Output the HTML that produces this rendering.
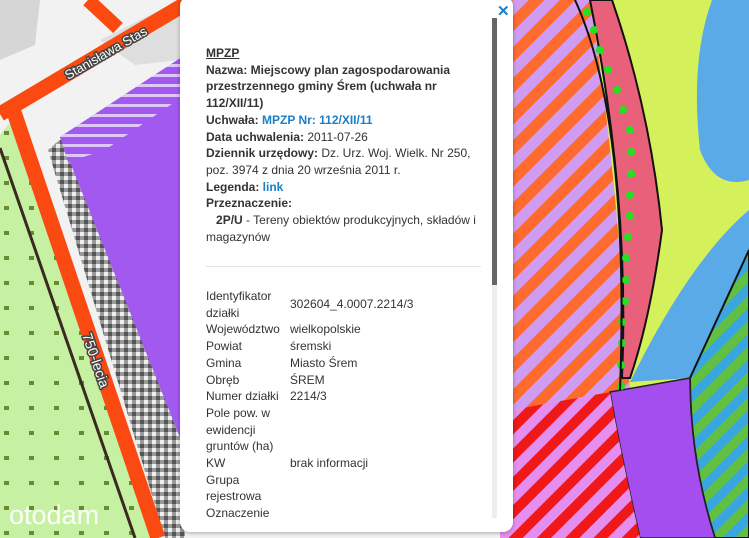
<!DOCTYPE html>
<html><head><meta charset="utf-8"><style>
html,body{margin:0;padding:0;width:749px;height:538px;overflow:hidden;font-family:"Liberation Sans",Arial,sans-serif}
#map{position:absolute;left:0;top:0}
#pop{position:absolute;left:180px;top:-4px;width:333px;height:536px;background:#fff;border-radius:10px;box-shadow:0 1px 4px rgba(0,0,0,.3)}
.t{position:absolute;left:26px;top:49px;width:292px;font-size:12px;line-height:16.7px;color:#333}
.t b{color:#333}
.bl{color:#1a7fc8;font-weight:bold}
#sep{position:absolute;left:26px;top:270px;width:275px;height:1px;background:#e4e4e4}
table{position:absolute;left:24px;top:292px;border-collapse:collapse;font-size:12px;line-height:16.7px;color:#333}
td{padding:0 2px;vertical-align:middle}
td:first-child{width:80px;vertical-align:top}
#sb{position:absolute;left:312px;top:22px;width:5px;height:500px;background:#eee}
#th{position:absolute;left:312px;top:22px;width:5px;height:267px;background:#666}
#x{position:absolute;left:317px;top:6px;color:#1a7fc8;font-weight:bold;font-size:15px}
#logo{position:absolute;left:9px;top:500px;color:#fff;font-size:27px;font-weight:normal;letter-spacing:0px;opacity:.95}
</style></head><body>
<svg id="map" width="749" height="538" viewBox="0 0 749 538">
<defs>
<pattern id="ol" width="22" height="22" patternUnits="userSpaceOnUse" patternTransform="rotate(-45)"><rect width="22" height="22" fill="#cf9cf2"/><rect width="22" height="11" fill="#ff6a2e"/></pattern>
<pattern id="rl" width="20" height="20" patternUnits="userSpaceOnUse" patternTransform="rotate(-45)"><rect width="20" height="20" fill="#e58ef0"/><rect width="20" height="10" fill="#f01818"/></pattern>
<pattern id="bg" width="18" height="18" patternUnits="userSpaceOnUse" patternTransform="rotate(-45)"><rect width="18" height="18" fill="#3aa6e0"/><rect width="18" height="9" fill="#62c040"/></pattern>
<pattern id="ph" width="10" height="10" patternUnits="userSpaceOnUse"><rect width="10" height="10" fill="#a259f0"/><rect y="4" width="10" height="3" fill="#ddc8f8"/></pattern>
<pattern id="gd" width="25" height="25" patternUnits="userSpaceOnUse"><rect width="25" height="25" fill="#c6f0a2"/><rect x="4" y="6" width="5" height="4" fill="#6a8a30"/></pattern>
<pattern id="ns" width="8" height="8" patternUnits="userSpaceOnUse"><rect width="8" height="8" fill="#9a9a9a"/><rect width="4" height="4" fill="#eee"/><rect x="4" y="4" width="4" height="4" fill="#555"/></pattern>
</defs>
<rect width="749" height="538" fill="#f2f2f2"/>
<polygon points="0,0 40,0 35,45 0,60" fill="#d6d6d6"/>
<polygon points="100,40 180,0 180,60 135,65" fill="#dedede"/>
<polygon points="0,135 12,120 150,538 0,538" fill="url(#gd)"/>
<polygon points="48,150 62,138 185,450 185,538 165,538" fill="url(#ns)"/>
<polygon points="60,137 185,55 185,450" fill="#a259f0"/>
<polygon points="60,137 185,55 185,95 105,150 68,162" fill="url(#ph)"/>
<line x1="0" y1="114" x2="185" y2="4" stroke="#fa4a12" stroke-width="15"/>
<line x1="88" y1="0" x2="118" y2="28" stroke="#fa4a12" stroke-width="14"/>
<line x1="14" y1="112" x2="158" y2="538" stroke="#fa4a12" stroke-width="15"/>
<line x1="0" y1="148" x2="135" y2="538" stroke="#3a2a20" stroke-width="3"/>
<text x="68" y="80" transform="rotate(-30 68 80)" font-size="13" fill="#fff" stroke="#444" stroke-width="3" paint-order="stroke">Stanisława Stas</text>
<text x="82" y="335" transform="rotate(71 82 335)" font-size="14" fill="#fff" stroke="#444" stroke-width="3" paint-order="stroke">750-lecia</text>
<rect x="500" y="0" width="249" height="538" fill="#d4f05a"/>
<path d="M500,0 L590,0 Q615,150 630,390 L610,392 L500,412Z" fill="url(#ol)"/>
<path d="M590,0 L612,0 Q650,110 662,230 Q650,320 630,378 L622,378 Q630,200 590,0Z" fill="#e8607a" stroke="#111" stroke-width="2"/>
<path d="M712,0 L749,0 L749,180 Q715,190 700,150 Q690,60 712,0Z" fill="#5aaae8"/>
<path d="M749,210 L749,250 L690,378 L630,382 Q690,260 749,210Z" fill="#5aaae8"/>
<path d="M749,250 L749,538 L715,538 Q690,460 690,378Z" fill="url(#bg)" stroke="#111" stroke-width="2"/>
<path d="M610,392 L690,378 Q690,460 715,538 L640,538 Q620,450 610,392Z" fill="#a54ef0" stroke="#222" stroke-width="1.5"/>
<path d="M500,412 L610,392 Q620,450 640,538 L500,538Z" fill="url(#rl)"/>
<g fill="#22e022">
<circle cx="587" cy="12" r="4"/><circle cx="594" cy="30" r="4"/><circle cx="600" cy="50" r="4"/><circle cx="608" cy="70" r="4"/><circle cx="617" cy="90" r="4"/><circle cx="623" cy="110" r="4"/><circle cx="630" cy="130" r="4"/><circle cx="631" cy="152" r="4"/><circle cx="631" cy="174" r="4"/><circle cx="630" cy="195" r="4"/><circle cx="630" cy="216" r="4"/><circle cx="628" cy="237" r="4"/><circle cx="626" cy="258" r="4"/><circle cx="626" cy="280" r="4"/><circle cx="625" cy="301" r="4"/><circle cx="622" cy="322" r="4"/><circle cx="622" cy="343" r="4"/><circle cx="621" cy="365" r="4"/><circle cx="621" cy="386" r="4"/>
</g>
<path d="M575,0 Q630,120 620,390" stroke="#111" stroke-width="2" fill="none"/>
</svg>
<div id="pop">
<div id="x">✕</div>
<div class="t">
<b style="text-decoration:underline">MPZP</b><br>
<b>Nazwa: Miejscowy plan zagospodarowania<br>przestrzennego gminy Śrem (uchwała nr<br>112/XII/11)</b><br>
<b>Uchwała: </b><span class="bl">MPZP Nr: 112/XII/11</span><br>
<b>Data uchwalenia:</b> 2011-07-26<br>
<b>Dziennik urzędowy:</b> Dz. Urz. Woj. Wielk. Nr 250,<br>poz. 3974 z dnia 20 września 2011 r.<br>
<b>Legenda: </b><span class="bl">link</span><br>
<b>Przeznaczenie:</b><br>
&nbsp;&nbsp;&nbsp;<b>2P/U</b> - Tereny obiektów produkcyjnych, składów i<br>magazynów
</div>
<div id="sep"></div>
<table>
<tr><td>Identyfikator działki</td><td style="vertical-align:middle">302604_4.0007.2214/3</td></tr>
<tr><td>Województwo</td><td>wielkopolskie</td></tr>
<tr><td>Powiat</td><td>śremski</td></tr>
<tr><td>Gmina</td><td>Miasto Śrem</td></tr>
<tr><td>Obręb</td><td>ŚREM</td></tr>
<tr><td>Numer działki</td><td>2214/3</td></tr>
<tr><td>Pole pow. w ewidencji gruntów (ha)</td><td></td></tr>
<tr><td>KW</td><td>brak informacji</td></tr>
<tr><td>Grupa rejestrowa</td><td></td></tr>
<tr><td>Oznaczenie</td><td></td></tr>
</table>
<div id="sb"></div><div id="th"></div>
</div>
<div id="logo">otodam</div>
</body></html>
